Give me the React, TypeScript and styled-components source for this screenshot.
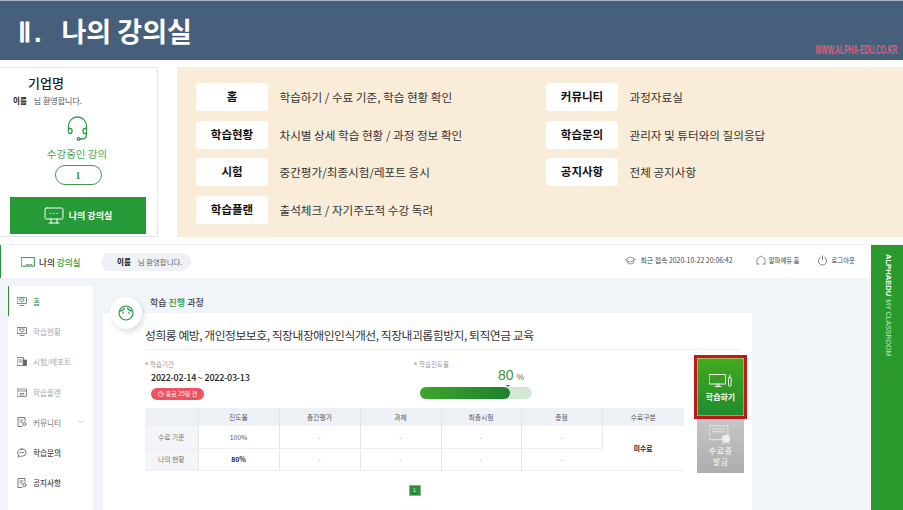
import React from "react";
import styled, { createGlobalStyle } from "styled-components";

const Global = createGlobalStyle`
  html, body { margin: 0; padding: 0; background: #fff; overflow: hidden; }
  body { font-family: "Noto Sans CJK KR", "Noto Sans", sans-serif; }
  * { box-sizing: border-box; }
`;

const Page = styled.div`
  width: 903px; height: 510px; overflow: hidden; display: flex; flex-direction: column; background: #fff;
`;
const Banner = styled.header`
  height: 60px; flex: none; background: #46607b; border-top: 1px solid #a9b6c4;
  display: flex; align-items: flex-start; justify-content: space-between; padding: 0 6px 0 18px;
`;
const BannerTitle = styled.h1`
  margin: 12px 0 0; font-size: 27px; line-height: 36px; font-weight: 700; color: #fff; letter-spacing: 0;
  span { font-family: "Liberation Sans", sans-serif; margin-right: 17px; letter-spacing: 3px; }
`;
const BannerUrl = styled.div`
  margin-top: 42px; font-family: "Liberation Sans", sans-serif; font-size: 12px; line-height: 14px; font-weight: 700;
  color: #d8607c; transform: scaleX(.55); transform-origin: right center; white-space: nowrap;
`;
const Intro = styled.section`
  margin-top: 7px; height: 170px; flex: none; display: flex; gap: 19px;
`;
const CompanyCard = styled.div`
  width: 158px; border: 1px solid #e2e5ea; border-left: 0; position: relative;
  display: flex; flex-direction: column; padding: 6px 11px 2px 10px;
`;
const CompanyName = styled.div`
  font-size: 13px; line-height: 18px; font-weight: 500; color: #222; margin-left: 18px;
`;
const Hello = styled.div`
  display: flex; gap: 7px; align-items: center; margin: 2px 0 0 3px; font-size: 8px; line-height: 13px; color: #555;
  b { font-size: 7.5px; color: #111; }
`;
const HeadsetWrap = styled.div`
  height: 25px; margin-top: 9px; display: flex; justify-content: center; margin-left: -1px;
`;
const Enrolled = styled.div`
  text-align: center; margin-top: 5px; font-size: 10.5px; line-height: 15px; color: #4ea35c; margin-left: -2px;
`;
const CountPill = styled.div`
  width: 47px; height: 20px; margin: 4px auto 0; border: 1px solid #3f9a50; border-radius: 10px;
  font-family: "Liberation Serif", serif; font-weight: 700; font-size: 11px; line-height: 18px; text-align: center; color: #3f9a50;
`;
const ClassroomBtn = styled.div`
  margin-top: auto; height: 37px; background: #279a38; color: #fff; font-size: 9px; font-weight: 700;
  display: flex; align-items: center; justify-content: center; gap: 5px; width: 136px;
`;
const GuidePanel = styled.div`
  flex: 1; background: #f9edd9; display: grid; grid-template-columns: 350px 1fr; padding: 16px 0 0 19px;
`;
const GuideCol = styled.div`
  display: flex; flex-direction: column; gap: 9.5px;
`;
const GuideRow = styled.div`
  display: flex; align-items: center; gap: 11.5px; height: 28px;
`;
const GuideTag = styled.div`
  width: 72px; height: 28px; flex: none; background: #fff; border-radius: 4px; text-align: center;
  font-size: 11.5px; line-height: 27px; font-weight: 700; color: #111;
`;
const GuideText = styled.div`
  font-size: 11.6px; color: #333; white-space: nowrap; line-height: 16px;
`;
const Classroom = styled.section`
  margin-top: 7px; flex: 1; min-height: 0; display: flex; border-top: 1px solid #eef0f2; gap: 1px;
`;
const Main = styled.div`
  width: 870px; display: flex; flex-direction: column; background: #f1f4f8;
`;
const TopBar = styled.div`
  height: 33px; flex: none; background: #fff; display: flex; align-items: center; padding: 0 15px 0 21px;
  position: relative; box-shadow: inset 1px 0 0 #2e8f3e;
`;
const BarTitle = styled.div`
  display: flex; align-items: center; gap: 4px; font-size: 8.6px; font-weight: 500; color: #333; width: 85px; flex: none; white-space: nowrap;
  em { font-style: normal; color: #2f9a45; }
`;
const Bubble = styled.div`
  position: relative; height: 18px; margin-left: -1px; padding: 0 9px 0 12px; background: #eef2f6; border-radius: 0 9px 9px 0;
  display: flex; align-items: center; gap: 7px; font-size: 7.4px; color: #666; width: 86px; white-space: nowrap;
  b { color: #111; font-size: 7.5px; }
  &::before {
    content: ""; position: absolute; left: -4px; top: 0; border-style: solid; border-width: 9px 4px 9px 0;
    border-color: transparent #eef2f6 transparent transparent;
  }
`;
const BarMeta = styled.div`
  margin-left: auto; display: flex; align-items: center; font-size: 6.4px; color: #444; white-space: nowrap; margin-top: -3px;
`;
const MetaItem = styled.div<{ $gap: number; $wide?: boolean }>`
  display: flex; align-items: center; gap: ${p => (p.$wide ? 4 : 3)}px; margin-left: ${p => p.$gap}px;
  font-size: ${p => (p.$wide ? 6.9 : 6.4)}px;
`;
const Body = styled.div`
  flex: 1; min-height: 0; display: flex; padding: 8px 0 0 8px; gap: 10px;
`;
const Sidebar = styled.nav`
  width: 85px; background: #fff; display: flex; flex-direction: column;
`;
const navColors = { active: "#3a8f4c", strong: "#444", mid: "#777", muted: "#a5a9ad" };
type NavTone = keyof typeof navColors;
const NavItem = styled.div<{ $tone: NavTone }>`
  height: 30.3px; flex: none; display: flex; align-items: center; gap: 6px; padding-left: 9px; position: relative;
  font-size: 7.6px; white-space: nowrap; font-weight: ${p => (p.$tone === "active" || p.$tone === "strong" ? 500 : 400)};
  color: ${p => navColors[p.$tone]};
  box-shadow: ${p => (p.$tone === "active" ? "inset 1px 0 0 #2e8f3e" : "none")};
  svg:last-child:not(:first-child) { position: absolute; right: 9px; }
`;
const Content = styled.div`
  width: 649px; position: relative; display: flex; flex-direction: column;
`;
const SectionHead = styled.div`
  height: 27px; flex: none; padding: 10px 0 0 47px; font-size: 9px; line-height: 14px; font-weight: 500; color: #444;
  em { font-style: normal; color: #2f9a45; }
`;
const FaceBadge = styled.div`
  position: absolute; left: 7px; top: 11px; width: 32px; height: 32px; border-radius: 50%; background: #fff;
  box-shadow: 2px 3px 5px rgba(120,130,140,.25); display: flex; align-items: center; justify-content: center;
`;
const Card = styled.div`
  flex: 1; background: #fff; padding: 0 12px 0 42px;
`;
const CourseTitle = styled.div`
  height: 37px; border-bottom: 1px solid #eef0f2; font-size: 11.8px; letter-spacing: -.45px; line-height: 44px; color: #333; white-space: nowrap;
`;
const CardBody = styled.div`
  display: flex; gap: 10px; align-items: flex-start;
`;
const LeftCol = styled.div`
  width: 539px; flex: none;
`;
const InfoRow = styled.div`
  height: 58px; display: flex; padding-top: 9px;
`;
const PeriodBlock = styled.div`
  width: 269px; flex: none;
`;
const FieldLabel = styled.div`
  font-size: 6.5px; line-height: 10px; color: #999;
  &::before { content: ""; display: inline-block; width: 3px; height: 3px; background: #bbb; border-radius: 50%; margin-right: 2px; vertical-align: 2px; }
`;
const Dates = styled.div`
  margin: 2px 0 0 6px; font-size: 9px; letter-spacing: -.24px; line-height: 14px; font-weight: 500; color: #222; white-space: nowrap;
`;
const DueBadge = styled.div`
  margin: 3px 0 0 6px; width: 53px; height: 12px; border-radius: 6px; background: #ef5261; color: #fff; font-size: 6px; line-height: 12px;
  display: flex; align-items: center; justify-content: center; gap: 2px; white-space: nowrap;
`;
const ProgressBlock = styled.div`
  width: 118px; flex: none; position: relative;
`;
const ProgressValue = styled.div`
  position: absolute; left: 84px; top: 8px; font-family: "Liberation Sans", sans-serif; font-size: 14px; line-height: 16px; color: #3a8f3e; white-space: nowrap;
  small { font-size: 8.5px; margin-left: 3px; color: #666; }
`;
const ProgressTrack = styled.div`
  position: absolute; left: 6px; top: 28px; width: 112px; height: 12px; border-radius: 6px; background: #d2e8d3;
`;
const ProgressFill = styled.div`
  height: 100%; border-radius: 6px; background: linear-gradient(90deg, #3ea52b, #1c8230); position: relative;
  &::after { content: ""; position: absolute; right: 0; top: -2px; border-style: solid; border-width: 2px 2px 0; border-color: #3a6a40 transparent transparent; }
`;
const Grid = styled.table`
  width: 539px; table-layout: fixed; border-collapse: collapse; font-size: 6.8px; color: #666; text-align: center;
`;
const Th = styled.th`
  height: 18px; background: #eef2f7; font-weight: 400; padding: 0; border-right: 1px solid #e0e5ea; color: #555;
  &:last-child { border-right: 0; }
`;
const RowHead = styled.td`
  height: 22px; padding: 0; background: #f3f5f8; border-bottom: 1px solid #eceff3; border-right: 1px solid #e4e8ed; color: #777;
`;
const Td = styled.td<{ $tone?: "strong" | "plain" }>`
  padding: 0; border-bottom: 1px solid #eceff3; border-right: 1px solid #e4e8ed;
  color: ${p => (p.$tone === "strong" ? "#222" : p.$tone === "plain" ? "#555" : "#999")};
  font-weight: ${p => (p.$tone === "strong" ? 700 : 400)};
  &:last-child { border-right: 0; }
`;
const Pager = styled.div`
  margin-top: 14px; display: flex; justify-content: center; 
`;
const PageBtn = styled.div`
  width: 12px; height: 11px; background: #2d8c3a; color: #dff0df; border: 1px solid #7fb889; font-family: "Liberation Sans", sans-serif; font-size: 6px; line-height: 9px; text-align: center;
`;
const ActionCol = styled.div`
  width: 53px; margin-top: 5px; display: flex; flex-direction: column; align-items: center;
`;
const StudyBtn = styled.div`
  width: 53px; height: 64px; border: 3px solid #c01818; background: linear-gradient(180deg, #45a91f, #1f8b2e); box-shadow: inset 0 0 0 .5px #e8d98a;
  color: #fff; font-size: 8px; font-weight: 700; display: flex; flex-direction: column; align-items: center; justify-content: center; gap: 4px; padding-top: 1px;
`;
const CertBtn = styled.div`
  width: 47px; height: 54px; background: linear-gradient(180deg, #c6c6c6, #adadad); color: #f4f4f4; font-size: 7.5px; line-height: 11px; font-weight: 500; letter-spacing: 1.2px;
  display: flex; flex-direction: column; align-items: center; padding-top: 6px; text-align: center;
`;
const CertLabel = styled.span`
  display: block; margin-left: 1px;
`;
const Rail = styled.aside`
  width: 32px; flex: 1; background: #2a9a2f; display: flex; justify-content: center; padding-top: 9px;
`;
const RailText = styled.div`
  writing-mode: vertical-rl; font-family: "Liberation Sans", sans-serif; font-size: 7px; line-height: 10px; color: #bfe8c0; white-space: nowrap; margin-left: 1px;
  b { color: #fff; margin-bottom: 3px; display: inline-block; font-size: 7.6px; }
`;

type IconProps = { c?: string };
const stroke = (c: string) => ({ fill: "none", stroke: c, strokeWidth: 1, strokeLinecap: "round" as const, strokeLinejoin: "round" as const });

const Headset = () => (
  <svg width="21" height="25" viewBox="0 0 21 25" {...stroke("#2e9a48")} strokeWidth={1.3}>
    <path d="M1.5 16.5V10a9 9 0 0 1 18 0v8.5" />
    <path d="M1.5 12.5H3a2 2 0 0 1 2 2v1a2 2 0 0 1-2 2 1.6 1.6 0 0 1-1.5-1" />
    <path d="M19.5 12.5H18a2 2 0 0 0-2 2v1a2 2 0 0 0 2 2h1.5" />
    <path d="M19.5 18.5c0 3.2-2.2 4.5-5 4.5h-1.5" />
    <circle cx="11.5" cy="23" r="1.3" />
  </svg>
);
const ChatMonitor = () => (
  <svg width="20" height="18" viewBox="0 0 20 18" {...stroke("#fff")}>
    <rect x="1" y="1" width="18" height="11" rx="1.5" />
    <path d="M7 12v4M13 12v4M5 16h10" />
    <path d="M6.5 6.5h.4M9.8 6.5h.4M13 6.5h.4" />
  </svg>
);
const LaptopIcon = () => (
  <svg width="14" height="10" viewBox="0 0 14 10" {...stroke("#2e9a48")}>
    <rect x=".6" y=".6" width="12.8" height="8.6" />
    <path d="M3 8.4h8.4V6.8l-3 .6-1.6-.6-3.8 1.6z" fill="#8a8f8c" stroke="none" />
  </svg>
);
const CapIcon = () => (
  <svg width="11" height="9" viewBox="0 0 11 9" {...stroke("#666")} strokeWidth={.7}>
    <path d="M.5 3.5 5.5 1l5 2.5-5 2.5z" />
    <path d="M2.5 4.8V7c1.5 1.2 4.5 1.2 6 0V4.8" />
  </svg>
);
const HomeIcon = () => (
  <svg width="10" height="10" viewBox="0 0 10 10" {...stroke("#666")} strokeWidth={.7}>
    <path d="M1 9V4l4-3 4 3v5" /><path d="M1 9h2M7 9h2" />
  </svg>
);
const PowerIcon = () => (
  <svg width="11" height="11" viewBox="0 0 11 11" {...stroke("#555")} strokeWidth={.7}>
    <path d="M3.4 2.2a4.2 4.2 0 1 0 4.2 0" /><path d="M5.5 .8v4" />
  </svg>
);
const HomeNav = ({ c = "#3a8f4c" }: IconProps) => (
  <svg width="10" height="9" viewBox="0 0 10 9" {...stroke(c)} strokeWidth={.8}>
    <rect x=".5" y=".5" width="9" height="6" /><path d="M3 3.5 5 5l2-1.5V2H3zM3 8.5h4" />
  </svg>
);
const ExamNav = ({ c = "#666" }: IconProps) => (
  <svg width="10" height="9" viewBox="0 0 10 9" {...stroke(c)} strokeWidth={.8}>
    <rect x=".5" y=".5" width="6" height="8" /><rect x="6.5" y="3" width="3" height="5.5" fill={c} /><path d="M2 3h3M2 5h3" />
  </svg>
);
const CalNav = ({ c = "#777" }: IconProps) => (
  <svg width="10" height="9" viewBox="0 0 10 9" {...stroke(c)} strokeWidth={.8}>
    <rect x=".5" y="1" width="9" height="7.5" /><path d="M.5 3h9M3 5.5h4M3 7h4" />
  </svg>
);
const DocNav = ({ c = "#555" }: IconProps) => (
  <svg width="10" height="10" viewBox="0 0 10 10" {...stroke(c)} strokeWidth={.8}>
    <path d="M8 4V.5H1v9h4" /><path d="M3 3h3M3 5h2" /><circle cx="7.3" cy="7" r="1.6" />
  </svg>
);
const ChatNav = ({ c = "#555" }: IconProps) => (
  <svg width="10" height="10" viewBox="0 0 10 10" {...stroke(c)} strokeWidth={.8}>
    <path d="M5 1a4 3.6 0 0 1 0 7.2H2.6L1.3 9.3l.3-2.3A3.6 3.6 0 0 1 5 1z" /><path d="M3 4.6h4" />
  </svg>
);
const Chevron = () => (
  <svg width="6" height="4" viewBox="0 0 6 4" {...stroke("#bbb")} strokeWidth={.7}><path d="m.5.8 2.5 2 2.5-2" /></svg>
);
const Face = () => (
  <svg width="16" height="16" viewBox="0 0 16 16" {...stroke("#2e8f4a")} strokeWidth={1.2}>
    <circle cx="8" cy="8" r="7" /><path d="M1.5 6c2 0 4-.8 5-3M14.5 6c-2 0-4-.8-5-3" /><path d="M5 7v1.2M11 7v1.2" />
  </svg>
);
const ClockMini = () => (
  <svg width="6" height="6" viewBox="0 0 6 6" {...stroke("#fff")} strokeWidth={.6}><circle cx="3" cy="3" r="2.6" /><path d="M3 1.6V3h1.2" /></svg>
);
const StudyIcon = () => (
  <svg width="23" height="13" viewBox="0 0 23 13" {...stroke("#fff")} strokeWidth={.9}>
    <rect x=".5" y=".5" width="16" height="9.5" /><path d="M6 12.5h6M8 10v2.5M10 10v2.5" />
    <rect x="19.5" y="3.5" width="2.6" height="8.5" rx=".6" /><path d="M20.8 3.5V1" />
  </svg>
);
const CertIcon = () => (
  <svg width="24" height="20" viewBox="0 0 26 21" {...stroke("#eee")} strokeWidth={.9}>
    <rect x=".5" y=".5" width="20" height="15" /><path d="M4 4h13M4 7h13" />
    <circle cx="18.5" cy="14.5" r="4" fill="#eee" /><path d="M16 18l-1 2.5M21 18l1 2.5" />
  </svg>
);

const nav: { label: string; icon: React.ReactNode; tone: NavTone; chevron?: boolean }[] = [
  { label: "홈", icon: <HomeNav />, tone: "active" },
  { label: "학습현황", icon: <HomeNav c="#666" />, tone: "muted" },
  { label: "시험/레포트", icon: <ExamNav />, tone: "muted" },
  { label: "학습플랜", icon: <CalNav />, tone: "muted" },
  { label: "커뮤니티", icon: <DocNav />, chevron: true, tone: "mid" },
  { label: "학습문의", icon: <ChatNav />, tone: "strong" },
  { label: "공지사항", icon: <DocNav />, tone: "strong" },
];
const guideA = [
  ["홈", "학습하기 / 수료 기준, 학습 현황 확인"],
  ["학습현황", "차시별 상세 학습 현황 / 과정 정보 확인"],
  ["시험", "중간평가/최종시험/레포트 응시"],
  ["학습플랜", "출석체크 / 자기주도적 수강 독려"],
];
const guideB = [
  ["커뮤니티", "과정자료실"],
  ["학습문의", "관리자 및 튜터와의 질의응답"],
  ["공지사항", "전체 공지사항"],
];
const widths = [53, 81, 81, 81, 80, 81, 82];

export default function App() {
  return (
    <Page>
      <Global />
      <Banner>
        <BannerTitle><span>Ⅱ.</span>나의 강의실</BannerTitle>
        <BannerUrl>WWW.ALPHA-EDU.CO.KR</BannerUrl>
      </Banner>
      <Intro>
        <CompanyCard>
          <CompanyName>기업명</CompanyName>
          <Hello><b>이름</b>님 환영합니다.</Hello>
          <HeadsetWrap><Headset /></HeadsetWrap>
          <Enrolled>수강중인 강의</Enrolled>
          <CountPill>1</CountPill>
          <ClassroomBtn><ChatMonitor />나의 강의실</ClassroomBtn>
        </CompanyCard>
        <GuidePanel>
          <GuideCol>
            {guideA.map(([t, d]) => <GuideRow key={t}><GuideTag>{t}</GuideTag><GuideText>{d}</GuideText></GuideRow>)}
          </GuideCol>
          <GuideCol>
            {guideB.map(([t, d]) => <GuideRow key={t}><GuideTag>{t}</GuideTag><GuideText>{d}</GuideText></GuideRow>)}
          </GuideCol>
        </GuidePanel>
      </Intro>
      <Classroom>
        <Main>
          <TopBar>
            <BarTitle><LaptopIcon /><span>나의 <em>강의실</em></span></BarTitle>
            <Bubble><b>이름</b>님 환영합니다.</Bubble>
            <BarMeta>
              <MetaItem $gap={0} $wide><CapIcon />최근 접속 2020-10-22 20:06:42</MetaItem>
              <MetaItem $gap={23}><HomeIcon />알파에듀 홈</MetaItem>
              <MetaItem $gap={18}><PowerIcon />로그아웃</MetaItem>
            </BarMeta>
          </TopBar>
          <Body>
            <Sidebar>
              {nav.map(n => (
                <NavItem key={n.label} $tone={n.tone}>
                  {n.icon}<span>{n.label}</span>{n.chevron && <Chevron />}
                </NavItem>
              ))}
            </Sidebar>
            <Content>
              <SectionHead>학습 <em>진행</em> 과정</SectionHead>
              <FaceBadge><Face /></FaceBadge>
              <Card>
                <CourseTitle>성희롱 예방, 개인정보보호, 직장내장애인인식개선, 직장내괴롭힘방지, 퇴직연금 교육</CourseTitle>
                <CardBody>
                  <LeftCol>
                    <InfoRow>
                      <PeriodBlock>
                        <FieldLabel>학습기간</FieldLabel>
                        <Dates>2022-02-14 ~ 2022-03-13</Dates>
                        <DueBadge><ClockMini />종료 25일 전</DueBadge>
                      </PeriodBlock>
                      <ProgressBlock>
                        <FieldLabel>학습진도율</FieldLabel>
                        <ProgressValue>80<small>%</small></ProgressValue>
                        <ProgressTrack><ProgressFill style={{ width: "80%" }} /></ProgressTrack>
                      </ProgressBlock>
                    </InfoRow>
                    <Grid>
                      <colgroup>{widths.map((w, i) => <col key={i} style={{ width: w }} />)}</colgroup>
                      <thead>
                        <tr>
                          {["", "진도율", "중간평가", "과제", "최종시험", "총점", "수료구분"].map((h, i) => <Th key={i}>{h}</Th>)}
                        </tr>
                      </thead>
                      <tbody>
                        <tr>
                          <RowHead>수료 기준</RowHead><Td $tone="plain">100%</Td><Td>-</Td><Td>-</Td><Td>-</Td><Td>-</Td>
                          <Td rowSpan={2} $tone="strong">미수료</Td>
                        </tr>
                        <tr>
                          <RowHead>나의 현황</RowHead><Td $tone="strong">80%</Td><Td>-</Td><Td>-</Td><Td>-</Td><Td>-</Td>
                        </tr>
                      </tbody>
                    </Grid>
                    <Pager><PageBtn>1</PageBtn></Pager>
                  </LeftCol>
                  <ActionCol>
                    <StudyBtn><StudyIcon />학습하기</StudyBtn>
                    <CertBtn><CertIcon /><CertLabel>수료증</CertLabel><CertLabel>발급</CertLabel></CertBtn>
                  </ActionCol>
                </CardBody>
              </Card>
            </Content>
          </Body>
        </Main>
        <Rail><RailText><b>ALPHAEDU</b>MY CLASSROOM</RailText></Rail>
      </Classroom>
    </Page>
  );
}
